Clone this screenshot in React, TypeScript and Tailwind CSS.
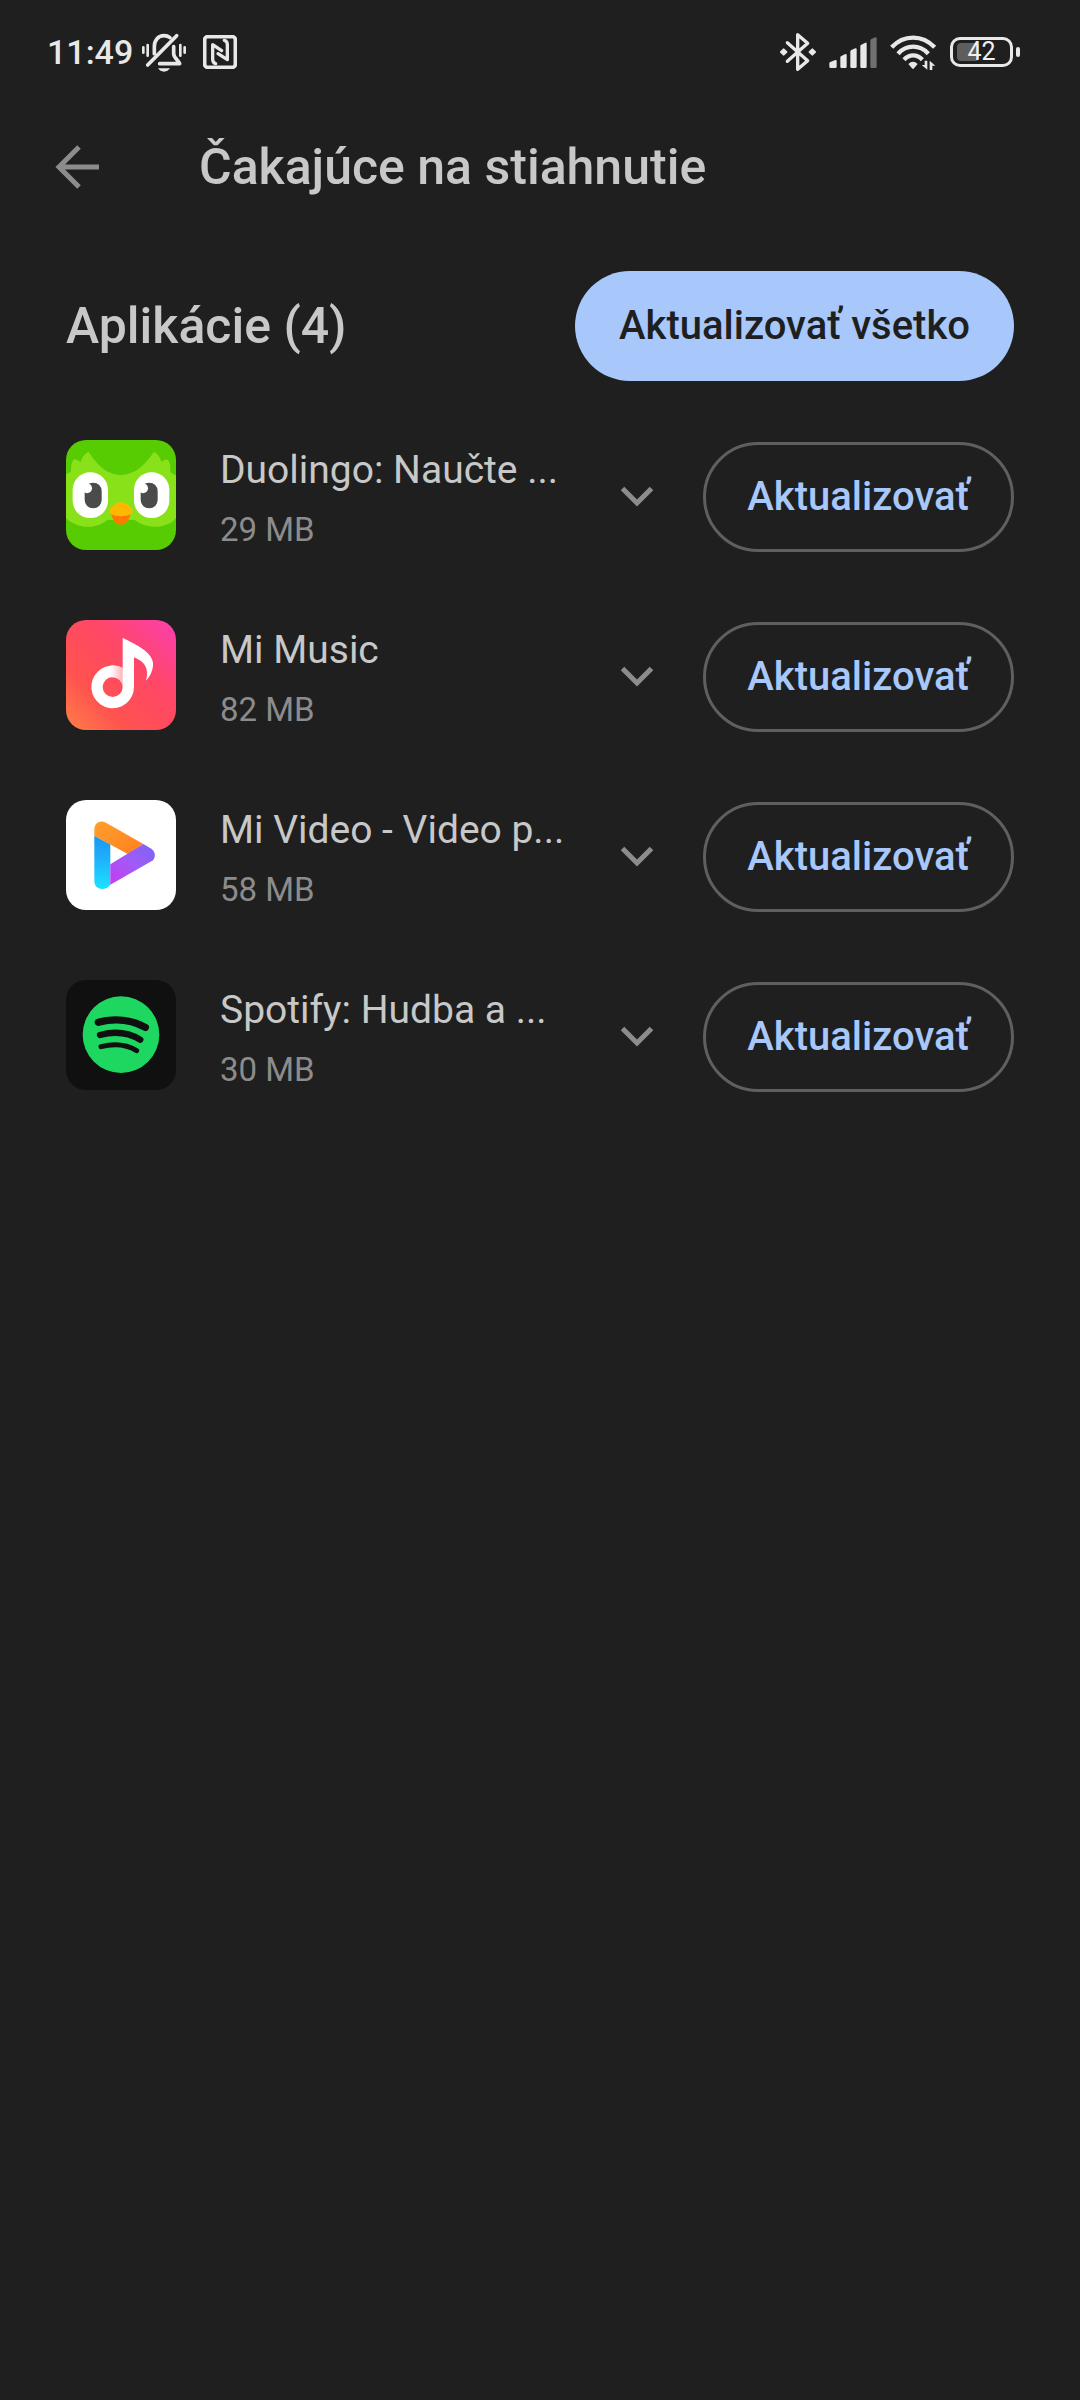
import type { ReactNode } from 'react';

function BellOffIcon() {
  return (
    <svg viewBox="336 36 138 123" className="h-[41px] w-[46px]" fill="none" stroke="#e8e8e8" strokeLinecap="round" aria-label="Zvonenie vypnuté">
      <path d="M343 82V98M356 75V107M454 75V107M467 82V98" strokeWidth="8" />
      <path d="M376 101V80C376 60 388 47 405 47C412 47 418 49 423 53" strokeWidth="11" />
      <path d="M434 80V101C434 112 446 119 452 131H392" strokeWidth="11" strokeLinejoin="round" />
      <path d="M356 135L443 47" strokeWidth="11" />
      <path d="M387 145H423C419 151 413 155 405 155C397 155 391 151 387 145Z" fill="#e8e8e8" stroke="none" />
    </svg>
  );
}

function NfcIcon() {
  return (
    <svg viewBox="6 6 102 102" className="size-[34px]" fill="none" stroke="#e8e8e8" strokeLinecap="round" strokeLinejoin="round" aria-label="NFC">
      <rect x="11" y="11" width="92" height="92" rx="9" strokeWidth="11" />
      <path d="M44 92Q35 90 35 79V35L62 53" strokeWidth="10" />
      <path d="M70 22Q79 24 79 35V80L51 62" strokeWidth="10" />
    </svg>
  );
}

function BluetoothIcon() {
  return (
    <svg viewBox="30 36 108 120" className="h-[40px] w-[36px]" fill="none" stroke="#e8e8e8" aria-label="Bluetooth">
      <path d="M52 68L113 122L83 148V44L113 70L52 124" strokeWidth="10" strokeLinejoin="round" strokeLinecap="round" />
      <path d="M41 88L49 96L41 104L33 96ZM127 88L135 96L127 104L119 96Z" fill="#e8e8e8" stroke="#e8e8e8" strokeWidth="6" strokeLinejoin="round" />
    </svg>
  );
}

function SignalIcon() {
  return (
    <svg viewBox="177 51 144 93" className="h-[31px] w-[48px]" fill="#e8e8e8" aria-label="Signál">
      <path d="M178 130Q178 127 181 126L196 120Q200 119 200 123V140Q200 144 196 144H182Q178 144 178 140Z" />
      <path d="M211 112Q211 109 214 108L226 102Q230 101 230 105V140Q230 144 226 144H215Q211 144 211 140Z" />
      <path d="M241 95Q241 92 244 90L256 85Q260 84 260 88V140Q260 144 256 144H245Q241 144 241 140Z" />
      <path d="M271 78Q271 75 274 74L286 68Q290 67 290 71V140Q290 144 286 144H275Q271 144 271 140Z" />
      <path d="M301 62Q301 59 304 57L316 52Q320 51 320 55V140Q320 144 316 144H305Q301 144 301 140Z" fill="#707070" />
    </svg>
  );
}

function WifiIcon() {
  return (
    <svg viewBox="359 45 141 105" className="h-[35px] w-[47px]" fill="none" stroke="#e8e8e8" aria-label="Wi-Fi">
      <path d="M364 82C400 43 456 43 493 82" strokeWidth="13" />
      <path d="M383 101C409 73 448 73 474 101" strokeWidth="13" />
      <path d="M401 119C417 102 440 102 456 119" strokeWidth="13" />
      <path d="M414 132Q428 119 442 132L431 145Q428 149 425 145Z" fill="#e8e8e8" stroke="none" />
      <path d="M471 122V149L454 135H463V122ZM478 150V122L495 137H486V150Z" fill="#e8e8e8" stroke="none" />
    </svg>
  );
}

function Battery() {
  return (
    <div className="flex items-center gap-[3px]">
      <div className="relative flex h-[30px] w-[63px] items-center justify-center rounded-[10px] border-[3px] border-[#e8e8e8]">
        <span className="absolute top-[3px] left-1 h-[18px] w-[22px] rounded-[4px] bg-[#5e5e5e]" />
        <span className="relative text-[25px] leading-6 text-[#f0f0f0]">42</span>
      </div>
      <span className="h-[10px] w-1 rounded-[2px] bg-[#e8e8e8]" />
    </div>
  );
}

function DuolingoIcon() {
  return (
    <svg viewBox="48 30 330 330" className="size-full">
      <rect x="48" y="30" width="330" height="330" fill="#58cc02" />
      <path d="M48 132L63 126Q62 98 72 88Q80 88 92 96Q98 74 116 65C136 96 163 133 213 135C262 133 290 96 312 65Q330 76 334 96Q346 86 354 90Q362 98 361 126L378 137V264C350 298 290 298 254 270H172C136 300 80 296 48 264Z" fill="#89e219" />
      <rect x="68" y="127" width="106" height="137" rx="52" fill="#fff" />
      <rect x="252" y="127" width="106" height="137" rx="52" fill="#fff" />
      <rect x="104" y="158" width="51" height="77" rx="25" fill="#4b4b4b" />
      <rect x="272" y="158" width="51" height="77" rx="25" fill="#4b4b4b" />
      <circle cx="111" cy="175" r="15" fill="#fff" />
      <circle cx="279" cy="175" r="15" fill="#fff" />
      <path d="M184 245H241C242 267 229 284 213 284C197 284 184 267 184 245Z" fill="#ff7b00" />
      <path d="M181 236C190 229 196 217 213 217C230 217 237 229 246 236Q252 244 244 252Q213 266 183 252Q175 244 181 236Z" fill="#ffb800" />
    </svg>
  );
}

function MiMusicIcon() {
  return (
    <svg viewBox="48 30 330 330" className="size-full">
      <defs>
        <linearGradient id="music-bg" x1="0" y1="1" x2="1" y2="0">
          <stop offset="0" stopColor="#ff8045" />
          <stop offset="0.28" stopColor="#ff5350" />
          <stop offset="0.62" stopColor="#ff4766" />
          <stop offset="1" stopColor="#fb3fb0" />
        </linearGradient>
        <linearGradient id="music-fold" x1="0" y1="0" x2="1" y2="0">
          <stop offset="0" stopColor="#fff" />
          <stop offset="1" stopColor="#ffb3b8" />
        </linearGradient>
      </defs>
      <rect x="48" y="30" width="330" height="330" fill="url(#music-bg)" />
      <path fillRule="evenodd" d="M218 83C262 106 304 124 309 158C311 178 300 200 288 212C297 180 288 156 252 142V231A64 64 0 1 1 218 174ZM188 201A30 30 0 1 0 188 261A30 30 0 1 0 188 201Z" fill="#fff" />
      <path d="M182 167Q202 165 218 174V231Q216 203 182 201Z" fill="url(#music-fold)" />
    </svg>
  );
}

function MiVideoIcon() {
  return (
    <svg viewBox="48 30 330 330" className="size-full">
      <defs>
        <linearGradient id="video-blue" x1="0" y1="0" x2="0" y2="1">
          <stop offset="0" stopColor="#1796f5" />
          <stop offset="0.4" stopColor="#20adfb" />
          <stop offset="1" stopColor="#1be3ff" />
        </linearGradient>
        <linearGradient id="video-orange" x1="0" y1="0" x2="1" y2="1">
          <stop offset="0" stopColor="#ff9f2b" />
          <stop offset="1" stopColor="#ff8020" />
        </linearGradient>
        <linearGradient id="video-purple" x1="0" y1="1" x2="1" y2="0">
          <stop offset="0" stopColor="#c43df0" />
          <stop offset="0.5" stopColor="#a25af7" />
          <stop offset="1" stopColor="#7965f6" />
        </linearGradient>
      </defs>
      <rect x="48" y="30" width="330" height="330" fill="#fff" />
      <path d="M133 137L181 163V284C169 303 133 302 133 273Z" fill="url(#video-blue)" />
      <path d="M133 137V118C133 98 152 89 168 98L280 162L233 192Z" fill="url(#video-orange)" />
      <path d="M280 162L304 176C318 186 318 206 304 214L181 284V223Z" fill="url(#video-purple)" />
    </svg>
  );
}

function SpotifyIcon() {
  return (
    <svg viewBox="48 30 330 330" className="size-full">
      <rect x="48" y="30" width="330" height="330" fill="#101010" />
      <circle cx="213" cy="194" r="115" fill="#1ed760" />
      <g fill="none" stroke="#101010" strokeLinecap="round">
        <path d="M145 157C193 144 245 149 286 172" strokeWidth="22" />
        <path d="M150 195C193 183 236 188 271 209" strokeWidth="19" />
        <path d="M153 230C192 220 231 224 260 242" strokeWidth="15" />
      </g>
    </svg>
  );
}

type AppUpdate = { id: string; name: string; size: string; icon: ReactNode };

const updates: AppUpdate[] = [
  { id: 'duolingo', name: 'Duolingo: Naučte ...', size: '29 MB', icon: <DuolingoIcon /> },
  { id: 'mi-music', name: 'Mi Music', size: '82 MB', icon: <MiMusicIcon /> },
  { id: 'mi-video', name: 'Mi Video - Video p...', size: '58 MB', icon: <MiVideoIcon /> },
  { id: 'spotify', name: 'Spotify: Hudba a ...', size: '30 MB', icon: <SpotifyIcon /> },
];

function UpdateRow({ app }: { app: AppUpdate }) {
  return (
    <li className="flex h-[180px] items-start pt-[35px]">
      <div className="size-[110px] shrink-0 overflow-hidden rounded-[20px]">{app.icon}</div>
      <div className="ml-11 min-w-0 flex-1">
        <h3 className="text-[39px] leading-[60px] whitespace-nowrap text-[#c8c8c8]">{app.name}</h3>
        <p className="text-[33px] leading-[60px] text-[#8c8c8c]">{app.size}</p>
      </div>
      <div className="flex shrink-0 items-center pt-0.5">
        <button type="button" aria-label={`Podrobnosti: ${app.name}`} className="flex h-[110px] w-[66px] items-center justify-center">
          <svg viewBox="0 0 34 22" className="h-[22px] w-[34px]" fill="none" stroke="#8c8c8c" strokeWidth="5">
            <path d="M2.5 2.5L17 17L31.5 2.5" />
          </svg>
        </button>
        <button type="button" className="ml-[33px] h-[110px] w-[311px] rounded-full border-[3px] border-[#5f5f5f] text-[40px] font-medium text-[#a8c7fa]">
          Aktualizovať
        </button>
      </div>
    </li>
  );
}

export default function App() {
  return (
    <div className="min-h-screen bg-[#1f1f1f] font-[Roboto,sans-serif] text-[#c8c8c8]">
      <div className="flex h-[104px] items-center justify-between pr-[60px] pl-[47px] text-[#e8e8e8]">
        <div className="flex items-center">
          <span className="text-[34px] leading-[44px] font-medium">11:49</span>
          <span className="ml-2 flex items-center gap-4">
            <BellOffIcon />
            <NfcIcon />
          </span>
        </div>
        <div className="flex items-center gap-[13px]">
          <BluetoothIcon />
          <SignalIcon />
          <WifiIcon />
          <Battery />
        </div>
      </div>

      <header className="flex h-[126px] items-center px-[55px]">
        <button type="button" aria-label="Späť" className="flex h-[110px] items-center">
          <svg viewBox="0 0 44 44" className="size-11" fill="none" stroke="#8c8c8c" strokeWidth="5">
            <path d="M24 2L4 22L24 42M4 22H44" />
          </svg>
        </button>
        <h1 className="ml-[100px] text-[50px] leading-[60px] font-medium">Čakajúce na stiahnutie</h1>
      </header>

      <main className="px-[66px] pt-[41px]">
        <div className="flex h-[110px] items-center justify-between">
          <h2 className="text-[50px] leading-[60px] font-medium">Aplikácie (4)</h2>
          <button type="button" className="h-[110px] w-[439px] shrink-0 rounded-full bg-[#a8c7fa] text-[40px] font-medium text-[#1f1f1f]">
            Aktualizovať všetko
          </button>
        </div>
        <ul className="mt-6">
          {updates.map((app) => (
            <UpdateRow key={app.id} app={app} />
          ))}
        </ul>
      </main>
    </div>
  );
}
